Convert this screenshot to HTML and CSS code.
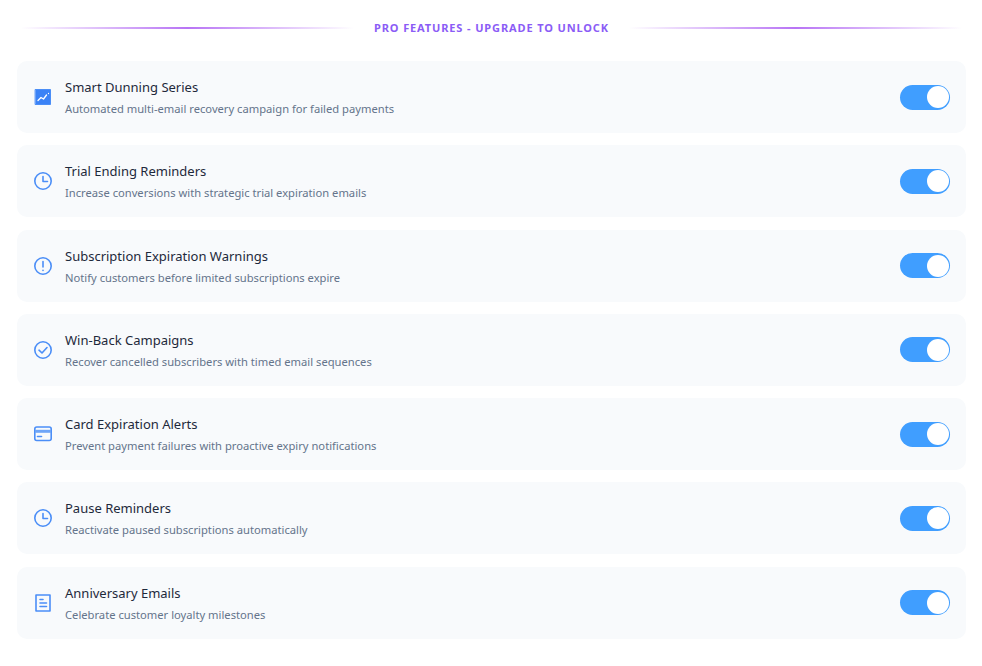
FILE: index.html
```html
<!DOCTYPE html>
<html lang="en">
<head>
	<meta charset="UTF-8">
	<meta name="viewport" content="width=device-width, initial-scale=1.0">
	<title>Pro Features</title>
	<link rel="stylesheet" href="styles.css">
</head>
<body>
	<div class="divider">
		<span class="line"></span>
		<span class="divider-text">PRO FEATURES - UPGRADE TO UNLOCK</span>
		<span class="line"></span>
	</div>

	<div class="features">
		<div class="feature">
			<svg class="icon" viewBox="0 0 24 24"><path class="solid" d="M4.500 4.500h15v15h-15z"/><path class="spark" d="M7 15.500l3-3 2.500 1.500 3-4M17.500 8.500v.01"/></svg>
			<div class="info">
				<h3>Smart Dunning Series</h3>
				<p>Automated multi-email recovery campaign for failed payments</p>
			</div>
			<span class="toggle"><span class="knob"></span></span>
		</div>
		<div class="feature">
			<svg class="icon" viewBox="0 0 24 24"><circle cx="12" cy="12" r="8.200"/><path d="M12 7.500v5h4.500"/></svg>
			<div class="info">
				<h3>Trial Ending Reminders</h3>
				<p>Increase conversions with strategic trial expiration emails</p>
			</div>
			<span class="toggle"><span class="knob"></span></span>
		</div>
		<div class="feature">
			<svg class="icon" viewBox="0 0 24 24"><circle cx="12" cy="12" r="8.200"/><path d="M12 7.500v5.500M12 16.200v.3"/></svg>
			<div class="info">
				<h3>Subscription Expiration Warnings</h3>
				<p>Notify customers before limited subscriptions expire</p>
			</div>
			<span class="toggle"><span class="knob"></span></span>
		</div>
		<div class="feature">
			<svg class="icon" viewBox="0 0 24 24"><circle cx="12" cy="12" r="8.200"/><path d="M8 12.200l3 2.800 5-5.500"/></svg>
			<div class="info">
				<h3>Win-Back Campaigns</h3>
				<p>Recover cancelled subscribers with timed email sequences</p>
			</div>
			<span class="toggle"><span class="knob"></span></span>
		</div>
		<div class="feature">
			<svg class="icon" viewBox="0 0 24 24"><rect x="3.800" y="5" width="16.400" height="13.500" rx="2"/><path class="band" d="M4 7.800h16v3H4z"/><path d="M6.500 14.500h4"/></svg>
			<div class="info">
				<h3>Card Expiration Alerts</h3>
				<p>Prevent payment failures with proactive expiry notifications</p>
			</div>
			<span class="toggle"><span class="knob"></span></span>
		</div>
		<div class="feature">
			<svg class="icon" viewBox="0 0 24 24"><circle cx="12" cy="12" r="8.200"/><path d="M12 7.500v5h4.500"/></svg>
			<div class="info">
				<h3>Pause Reminders</h3>
				<p>Reactivate paused subscriptions automatically</p>
			</div>
			<span class="toggle"><span class="knob"></span></span>
		</div>
		<div class="feature">
			<svg class="icon" viewBox="0 0 24 24"><path d="M5 4h14v16H5z"/><path d="M9 8.500h3M9 12h6.500M9 15.500h6.500"/></svg>
			<div class="info">
				<h3>Anniversary Emails</h3>
				<p>Celebrate customer loyalty milestones</p>
			</div>
			<span class="toggle"><span class="knob"></span></span>
		</div>
	</div>
</body>
</html>
```

FILE: styles.css
```css
* {
	margin: 0;
	padding: 0;
	box-sizing: border-box;
}

body {
	padding: 20px 16px 0 17px;
	background-color: #ffffff;
	font-family: "Noto Sans", "Open Sans", sans-serif;
}

/* Heading divider */
.divider {
	display: flex;
	align-items: center;
	gap: 20px;
	height: 15px;
	margin-bottom: 26px;
	padding: 0 4px;
}

.line {
	flex: 1;
	height: 2px;
	background: linear-gradient(90deg, transparent, #b874f5, transparent);
}

.divider-text {
	color: #8b5cf6;
	font-size: 11px;
	font-weight: 700;
	letter-spacing: .875px;
	white-space: nowrap;
}

/* Feature list */
.features {
	display: flex;
	flex-direction: column;
	gap: 12.250px;
}

.feature {
	display: flex;
	align-items: center;
	height: 72px;
	padding: 0 16px 0 14px;
	border-radius: 10px;
	background-color: #f8fafc;
}

.icon {
	flex: none;
	width: 24px;
	height: 24px;
	margin-right: 10px;
	fill: none;
	stroke: #4b8ef7;
	stroke-width: 1.600;
	stroke-linecap: round;
	stroke-linejoin: round;
}

.icon .solid {
	fill: #3b82f6;
	stroke-width: 1;
}

.icon .spark {
	stroke: #ffffff;
	stroke-width: 1.300;
}

.icon .band {
	fill: #6ea5f8;
	stroke: none;
}

.info {
	flex: 1;
}

.info h3 {
	color: #1e293b;
	font-size: 13px;
	font-weight: 400;
	line-height: 20px;
}

.info p {
	margin-top: 3px;
	color: #64748b;
	font-size: 11.200px;
	line-height: 17px;
}

/* Switch */
.toggle {
	display: flex;
	justify-content: flex-end;
	align-items: center;
	width: 50px;
	height: 25px;
	padding-right: 1.500px;
	border-radius: 13px;
	background-color: #409eff;
}

.knob {
	width: 22px;
	height: 22px;
	border-radius: 50%;
	background-color: #ffffff;
}
```
